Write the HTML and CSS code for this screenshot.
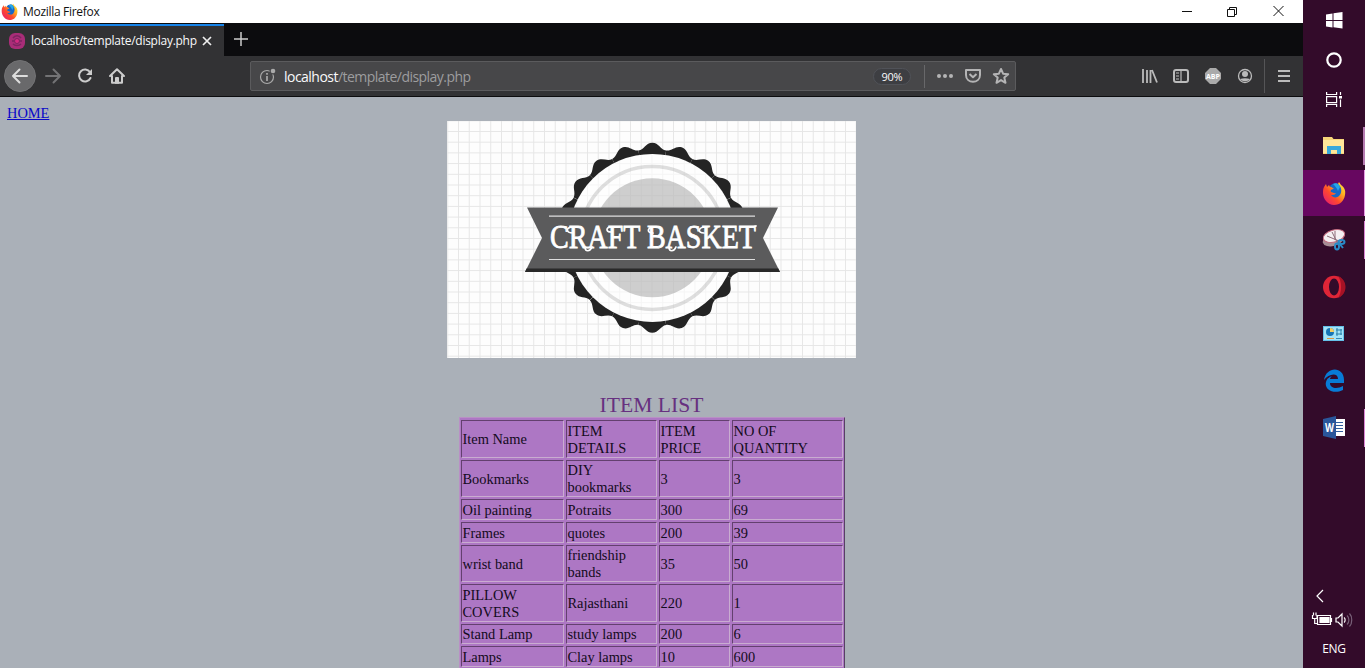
FILE: index.html
```html
<!DOCTYPE html>
<html lang="en">
<head>
<meta charset="utf-8">
<title>localhost/template/display.php</title>
<link rel="stylesheet" href="styles.css">
</head>
<body>
<svg class="defs" width="0" height="0">
  <defs>
    <linearGradient id="flame" x1="1" y1="0" x2="0.1" y2="0.9"><stop offset="0" stop-color="#fff04a"/><stop offset=".35" stop-color="#ffb020"/><stop offset=".65" stop-color="#ff4a2c"/><stop offset="1" stop-color="#e8206a"/></linearGradient>
    <symbol id="firefox" viewBox="0 0 24 24">
      <path d="M2 6 4 3l1 3 2-2 1 2c2-3 6-4 8-3l1-2 2 3c3 2 5 5 4 10-1 6-5 10-11 10S1 18 1 12c0-2 0-4 1-6Z" fill="url(#flame)"/>
      <path d="M8 5c2-3 7-4 9-1 3 3 3 8 0 11-2 2-6 2-8-1 2 0 4 0 5-2-2 1-3-1-5-1-1-2 1-3 3-3-1-1-3-2-4-3Z" fill="#1769c9"/>
      <path d="M11 3c3-2 6 0 7 3l-2 4c-1-3-3-5-5-7Z" fill="#24a7e8"/>
    </symbol>
    <g id="wedge"><path d="M0 0-13.8-87.2C-8-88.2-6.5-95 0-95S8-88.2 13.8-87.2Z"/></g>
    <g id="quarter"><use href="#wedge"/><use href="#wedge" transform="rotate(18)"/><use href="#wedge" transform="rotate(36)"/><use href="#wedge" transform="rotate(54)"/><use href="#wedge" transform="rotate(72)"/></g>
    <pattern id="grid" x="11" y="10" width="10.75" height="10.7" patternUnits="userSpaceOnUse"><path d="M.5 0V11M0 .5H11" stroke="#777" stroke-opacity=".17" fill="none"/></pattern>
  </defs>
</svg>
<div class="browser">
  <header class="titlebar">
    <svg class="app-icon" width="17" height="17"><use href="#firefox"/></svg>
    <span class="app-name">Mozilla Firefox</span>
    <svg class="window-buttons" width="106" height="20" viewBox="0 0 106 20" fill="none" stroke="#111"><path d="M0 9.500h10M45.500 7.500h7v7h-7zM47.500 7V5.500h7v7h-1.500M91.500 4l10 10M101.500 4l-10 10"/></svg>
  </header>
  <div class="tabs">
    <div class="tab">
      <svg width="16" height="16" viewBox="0 0 16 16"><rect width="16" height="16" rx="6" fill="#a92d78"/><path d="M4 5c2-3 6-3 8 0M4 11c2 2 6 2 8 0M3 8h2m6 0h2" stroke="#7b2560" stroke-width="1.500" fill="none"/><circle cx="8" cy="8" r="2.500" fill="#d32b83" stroke="#7b2560"/></svg>
      <span class="tab-title">localhost/template/display.php</span>
      <svg class="tab-close" width="10" height="10" viewBox="0 0 10 10"><path d="m1 1 8 8m0-8-8 8" stroke="#eee" stroke-width="1.700"/></svg>
    </div>
    <svg class="new-tab" width="14" height="14" viewBox="0 0 14 14"><path d="M7 0v14M0 7h14" stroke="#ccc" stroke-width="1.500"/></svg>
  </div>
  <nav class="toolbar">
    <div class="nav-buttons">
      <svg width="128" height="40" viewBox="0 0 128 40" fill="none" stroke="#ccc" stroke-width="2" stroke-linecap="round" stroke-linejoin="round">
        <circle cx="20" cy="20" r="15.500" fill="#69696b" stroke="#727274" stroke-width="1"/>
        <path d="M13 20h14M19.500 13.500 13 20l6.500 6.500" stroke="#ddd"/>
        <path d="M46 20h14M53.500 13.500 60 20l-6.500 6.500" stroke="#737375"/>
        <path d="M90 16a6 6 0 1 0 .5 6"/><path d="M92 13v6h-6z" fill="#ccc" stroke="none"/>
        <path d="m110 20 7-6.700 7 6.700M112 20v6.800h10V20" /><path d="M116 27v-5h2v5"/>
      </svg>
    </div>
    <div class="address">
      <svg width="17" height="17" viewBox="0 0 17 17"><circle cx="8" cy="9" r="6.500" fill="none" stroke="#aaa" stroke-width="1.200"/><path d="M8 8v5M8 5v1.700" stroke="#aaa" stroke-width="1.700"/><circle cx="14" cy="3" r="3.500" fill="#474749"/><circle cx="14" cy="3" r="2.300" fill="#aaa"/></svg>
      <span class="url"><b>localhost</b>/template/display.php</span>
      <span class="zoom">90%</span>
      <svg class="address-icons" width="91" height="28" viewBox="0 0 91 28" fill="none" stroke="#b4b4b5" stroke-width="2" stroke-linejoin="round">
        <path d="M.5 3v23" stroke="#68686a" stroke-width="1"/>
        <g fill="#b4b4b5" stroke="none"><circle cx="15" cy="14" r="2"/><circle cx="21" cy="14" r="2"/><circle cx="27" cy="14" r="2"/></g>
        <path d="M42 8h14v5c0 9-14 9-14 0Z"/><path d="m45.500 12 3.500 3.300 3.500-3.300"/>
        <path d="m77 7 2.100 4.700 5.100.5-3.900 3.400 1.200 5.200-4.500-2.700-4.500 2.700 1.200-5.200-3.900-3.400 5.100-.5Z"/>
      </svg>
    </div>
    <svg class="tools" width="163" height="40" viewBox="0 0 163 40" fill="none" stroke="#bbb" stroke-width="2">
      <path d="M3 13v14M7 14v13M10.500 14v13M12 14l5 12.500" stroke-width="1.800"/>
      <rect x="34" y="14" width="14" height="12" rx="2"/><path d="M41 14v12M36 17h3M36 20h3M36 23h3" stroke-width="1.200"/>
      <path d="M70 12h6l5 5v6l-5 5h-6l-5-5v-6Z" fill="#aaa" stroke="none"/>
      <text x="66" y="23" class="abp" textLength="14" lengthAdjust="spacingAndGlyphs">ABP</text>
      <circle cx="105" cy="20" r="6.500" stroke-width="1.300"/><circle cx="105" cy="18" r="3" fill="#bbb" stroke="none"/><path d="M100 23c3-1 7-1 10 0-2 3-8 3-10 0" fill="#bbb" stroke="none"/>
      <path d="M124.500 3v34" stroke="#555557" stroke-width="1"/>
      <path d="M138 15h12M138 20h12M138 25h12"/>
    </svg>
  </nav>
  <main class="page">
    <a class="home" href="#">HOME</a>
    <svg class="logo" width="409" height="237" viewBox="0 0 409 237">
      <path d="M0 0h409v237H0z" fill="#fdfdfd"/>
      <path d="M0 0h409v237H0z" fill="url(#grid)"/>
      <g transform="translate(205.300 116.700)" fill="#242424"><use href="#quarter"/><use href="#quarter" transform="rotate(90)"/><use href="#quarter" transform="rotate(180)"/><use href="#quarter" transform="rotate(270)"/></g>
      <circle cx="205.300" cy="116.900" r="84" fill="#fefefe"/>
      <circle cx="205.300" cy="116.900" r="71.500" fill="none" stroke="#dedede" stroke-width="3.500"/>
      <circle cx="205.300" cy="116.700" r="59.500" fill="#cecece"/>
      <circle cx="205.300" cy="116.900" r="84" fill="url(#grid)" opacity=".4"/>
      <path d="M80 86.500h251L316 117l17 34H78l17-34Z" fill="#5b5b5c"/>
      <path d="m79.500 147.500-1.500 3.500h255l-1.700-3.500Z" fill="#292929"/>
      <path d="M102 95.200h206M102 138.500h206" stroke="#dedede" stroke-width="1.200"/>
      <text x="103" y="127" class="brand" textLength="206" lengthAdjust="spacingAndGlyphs">CRAFT BASKET</text>
      <path d="M126 112c-7 0-8-6 0-6M145 126c-2 5-7 5-7 0M164 111c-5 0-6-5 1-5M206 112c-7 0-6-6 2-6M229 126c-2 5-7 5-7 0M257 112c-7 0-6-6 2-6M309 105c-2 1-4 1-6 1" stroke="#fff" stroke-width="1.700" fill="none" stroke-linecap="round"/>
    </svg>
    <h1 class="list-title">ITEM LIST</h1>
    <div class="items">
      <div>Item Name</div><div>ITEM<br>DETAILS</div><div>ITEM<br>PRICE</div><div>NO OF<br>QUANTITY</div>
      <div>Bookmarks</div><div>DIY<br>bookmarks</div><div>3</div><div>3</div>
      <div>Oil painting</div><div>Potraits</div><div>300</div><div>69</div>
      <div>Frames</div><div>quotes</div><div>200</div><div>39</div>
      <div>wrist band</div><div>friendship<br>bands</div><div>35</div><div>50</div>
      <div>PILLOW<br>COVERS</div><div>Rajasthani</div><div>220</div><div>1</div>
      <div>Stand Lamp</div><div>study lamps</div><div>200</div><div>6</div>
      <div>Lamps</div><div>Clay lamps</div><div>10</div><div>600</div>
    </div>
  </main>
</div>
<aside class="taskbar">
  <div class="sys"><svg width="17" height="17" viewBox="0 0 17 17" fill="#fff"><path d="M0 2.500 6.500 1.500V8H0zM7.500 1.300 16.500 0v8h-9zM0 9h6.500v6.500L0 14.500zM7.500 9h9v7.500l-9-1.200z"/></svg></div>
  <div class="sys"><svg width="18" height="18"><circle cx="9" cy="9" r="6.700" fill="none" stroke="#fff" stroke-width="2.200"/></svg></div>
  <div class="sys task-view"><svg width="17" height="17" viewBox="0 0 17 17" fill="none" stroke="#fff" stroke-width="1.200"><path d="M.6 1v2.500h10V1M.6 5.600h10v6H.6zM.6 16v-2.500h10V16M14.500 1v3M14.500 8.500V16"/><path d="M13 5h3v2.500h-3z" fill="#fff" stroke="none"/></svg></div>
  <div class="app running"><svg width="22" height="19" viewBox="0 0 22 19"><path d="M0 1h9l1.500 2H21v15H0Z" fill="#f6d579"/><path d="M0 4h21v13H0Z" fill="#ffe69a"/><path d="M4 10h14v8h-4v-4H8v4H4Z" fill="#38a8dc"/></svg></div>
  <div class="app active"><svg width="24" height="24"><use href="#firefox"/></svg></div>
  <div class="app running"><svg width="24" height="24" viewBox="0 0 24 24"><ellipse cx="11" cy="12" rx="10.500" ry="6" fill="#a78e96" transform="rotate(-15 11 12)"/><ellipse cx="12" cy="8" rx="11" ry="6" fill="#f4eff2" stroke="#c46c80" transform="rotate(-15 12 8)"/><path d="m10 4 6 12M5 8l12 5M13 3v9" stroke="#8c6b78"/><g fill="none" stroke="#288bc8" stroke-width="2"><ellipse cx="19.500" cy="14" rx="3" ry="2"/><ellipse cx="15" cy="18.500" rx="2" ry="3"/><path d="m17 15 4 5"/></g></svg></div>
  <div class="app"><svg width="24" height="24" viewBox="0 0 24 24"><ellipse cx="12" cy="12" rx="11" ry="11.300" fill="#df2537"/><path d="M16 1c10 4 10 18 0 22 4-5 4-17 0-22" fill="#a61225"/><ellipse cx="12" cy="12" rx="5" ry="8.500" fill="#330b2a"/></svg></div>
  <div class="app"><svg width="22" height="16" viewBox="0 0 22 16"><path d="M0 0h21v15H0Z" fill="#64bfe8"/><path d="M1 1h19v13H1Z" fill="#a4e3f7"/><circle cx="7" cy="6" r="4" fill="#1674b5"/><path d="M7 6V2a4 4 0 0 1 4 4Z" fill="#f2cd64"/><path d="M13 4h6M13 8h6M14 2v8M18 3v6" stroke="#277fa8"/><path d="M4 12.500h7" stroke="#db9a42"/><path d="M13 12.500h6" stroke="#3589b7"/></svg></div>
  <div class="app"><svg width="21" height="23" viewBox="0 0 21 23"><path d="M0 11C2-3 20-3 20 11v3H6c0 6 8 6 13 3v4C9 26 0 20 2 13c1-4 4-5 6-6-1 1-2 2-2 3h8c0-7-10-5-14 1Z" fill="#087bd6"/></svg></div>
  <div class="app running thin"><svg width="23" height="23" viewBox="0 0 23 23"><path d="M11 3h11v17H11z" fill="#fff"/><path d="M13 6.500h7M13 9.500h7M13 12.500h7M13 15.500h7" stroke="#315e9d"/><path d="M0 3 13 0v23L0 20Z" fill="#2a569a"/><text x="2" y="15.500" class="word" textLength="9" lengthAdjust="spacingAndGlyphs">W</text></svg></div>
  <div class="tray">
    <svg width="62" height="50" viewBox="0 0 62 50" fill="none" stroke="#fff" stroke-width="1.200"><path d="m20 4-6 6 6 6M14.500 29.500h13v9h-13zM28.500 32v4M9.500 29v3.500h4.500V29M10.500 26.500v3M13 26.500v3M11.700 33v4.500h3"/><path d="M17 31.500h9v5h-9z" fill="#fff"/><path d="M33 32h2l4-4v12l-4-4h-2Z"/><path d="M41 31.500c1.500 1 1.500 4 0 5"/><path d="M44 29.500c2.500 2 2.500 7 0 9M46.500 27.500c3 3 3 10 0 13" stroke="#786078"/></svg>
    <span class="lang">ENG</span>
  </div>
</aside>
</body>
</html>
```
FILE: styles.css
```css
* { box-sizing: border-box; }
body { margin: 0; width: 1365px; height: 668px; display: flex; overflow: hidden; font-family: "Open Sans", "Noto Sans", sans-serif; }
svg { display: block; flex: none; }
.defs { position: absolute; }
.browser { width: 1303px; height: 668px; display: flex; flex-direction: column; overflow: hidden; }
.titlebar { height: 23px; flex: none; background: #fff; display: flex; align-items: center; padding: 0 15px 0 1px; }
.app-name { margin-left: 5px; font-size: 12px; letter-spacing: -.3px; color: #111; }
.window-buttons { margin-left: auto; }
.tabs { height: 33px; flex: none; background: #0c0c0e; display: flex; align-items: center; }
.tab { width: 224px; height: 32px; align-self: flex-end; background: #323234; border-top: 2px solid #1683e8; display: flex; align-items: center; padding: 0 0 1px 9px; }
.tab-title { width: 166px; margin-left: 6px; white-space: nowrap; font-size: 12px; letter-spacing: -.26px; color: #f9f9fa; }
.tab-close { margin-left: 5px; }
.new-tab { margin-left: 10px; margin-top: -1px; }
.toolbar { height: 41px; flex: none; background: #323234; border-bottom: 1px solid #0c0c0e; display: flex; align-items: center; }
.nav-buttons { width: 250px; }
.address { width: 766px; height: 30px; background: #474749; border: 1px solid #5b5b5d; border-radius: 2px; display: flex; align-items: center; padding-left: 8px; }
.url { margin-left: 8px; font-size: 14px; letter-spacing: -.53px; color: #9d9d9f; white-space: nowrap; }
.url b { font-weight: 400; color: #f9f9fa; }
.zoom { width: 38px; height: 17px; margin-left: auto; border-radius: 9px; background: #3d3e42; border: 1px solid #505258; color: #f9f9fa; font-size: 11px; line-height: 15px; text-align: center; letter-spacing: -.3px; }
.address-icons { margin-left: 13px; }
.tools { margin-left: auto; }
.abp { font: 700 7.5px "Open Sans", sans-serif; fill: #fff; stroke: none; }
.page { flex: 1; background: #aab0b8; display: flex; flex-direction: column; align-items: center; font-family: "Liberation Serif", "Times New Roman", serif; overflow: hidden; }
.home { align-self: flex-start; margin: 8px 0 0 7px; height: 16px; font-size: 14.4px; line-height: 17px; color: #0808c8; }
.logo { flex: none; }
.brand { font: 400 34px "Liberation Serif", serif; fill: #fff; stroke: #fff; stroke-width: .8px; }
.list-title { margin: 34px 0 0; height: 25px; flex: none; font-size: 21.6px; font-weight: 400; line-height: 27px; color: #673080; }
.items { flex: none; display: grid; grid-template-columns: 103px 91px 71px 111px; grid-template-rows: 38px 37px 21px 21px 37px 38px 20px 21px; gap: 2px; padding: 2px 1px; background: #ad77c4; border: 1px solid; border-color: #b98fc5 #584064 #584064 #b98fc5; font-size: 14.4px; line-height: 17px; color: #130b20; }
.items div { display: flex; align-items: center; padding: 1px 0 0 1px; border: 1px solid; border-color: #63406f #c9acd0 #c9acd0 #63406f; white-space: nowrap; }
.taskbar { width: 62px; height: 668px; background: #330b2a; display: flex; flex-direction: column; }
.sys { height: 40px; flex: none; display: flex; align-items: center; justify-content: center; }
.task-view { padding-bottom: 2px; }
.app { height: 47px; flex: none; display: flex; align-items: center; justify-content: center; position: relative; padding-bottom: 2px; }
.sys + .app { margin-top: 3px; }
.active { background: linear-gradient(#670760, #670760) 0 0 / 62px 46px no-repeat; }
.running::after, .active::after { content: ""; position: absolute; right: 0; top: 4px; width: 2px; height: 38px; background: #b67bb1; }
.active::after { top: 0; height: 46px; width: 1px; background: #e69be2; }
.thin::after, .active + .running::after { width: 1px; background: #dc85d5; }
.word { font: 700 12px "Open Sans", sans-serif; fill: #fff; }
.tray { margin-top: auto; height: 82px; display: flex; flex-direction: column; align-items: center; }
.lang { font-size: 12px; line-height: 26px; letter-spacing: -.3px; color: #fff; }
```
